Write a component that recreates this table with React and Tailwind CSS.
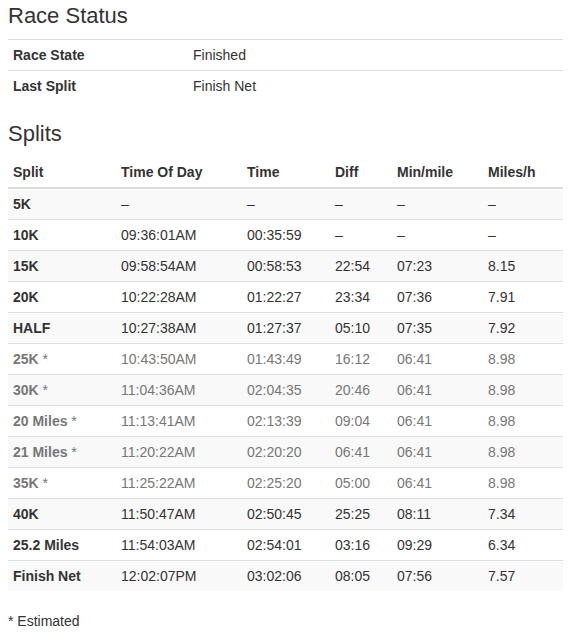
const rows = [
  { name: '5K', tod: '–', time: '–', diff: '–', pace: '–', mph: '–' },
  { name: '10K', tod: '09:36:01AM', time: '00:35:59', diff: '–', pace: '–', mph: '–' },
  { name: '15K', tod: '09:58:54AM', time: '00:58:53', diff: '22:54', pace: '07:23', mph: '8.15' },
  { name: '20K', tod: '10:22:28AM', time: '01:22:27', diff: '23:34', pace: '07:36', mph: '7.91' },
  { name: 'HALF', tod: '10:27:38AM', time: '01:27:37', diff: '05:10', pace: '07:35', mph: '7.92' },
  { name: '25K', est: true, tod: '10:43:50AM', time: '01:43:49', diff: '16:12', pace: '06:41', mph: '8.98' },
  { name: '30K', est: true, tod: '11:04:36AM', time: '02:04:35', diff: '20:46', pace: '06:41', mph: '8.98' },
  { name: '20 Miles', est: true, tod: '11:13:41AM', time: '02:13:39', diff: '09:04', pace: '06:41', mph: '8.98' },
  { name: '21 Miles', est: true, tod: '11:20:22AM', time: '02:20:20', diff: '06:41', pace: '06:41', mph: '8.98' },
  { name: '35K', est: true, tod: '11:25:22AM', time: '02:25:20', diff: '05:00', pace: '06:41', mph: '8.98' },
  { name: '40K', tod: '11:50:47AM', time: '02:50:45', diff: '25:25', pace: '08:11', mph: '7.34' },
  { name: '25.2 Miles', tod: '11:54:03AM', time: '02:54:01', diff: '03:16', pace: '09:29', mph: '6.34' },
  { name: 'Finish Net', tod: '12:02:07PM', time: '03:02:06', diff: '08:05', pace: '07:56', mph: '7.57' },
];

export default function App() {
  return (
    <div
      className="bg-white text-[#333] text-[14px] leading-[20px] px-[8px] pb-[10px]"
      style={{ fontFamily: '"Liberation Sans", Arial, sans-serif' }}
    >
      <h3 className="text-[22px] leading-[24px] font-normal mt-[4px] mb-[11px]">Race Status</h3>
      <table className="w-[555px] table-fixed border-collapse">
        <colgroup>
          <col className="w-[180px]" />
          <col />
        </colgroup>
        <tbody>
          <tr>
            <th className="text-left font-bold px-[5px] py-[5px] border-t border-[#ddd]">Race State</th>
            <td className="px-[5px] py-[5px] border-t border-[#ddd]">Finished</td>
          </tr>
          <tr>
            <th className="text-left font-bold px-[5px] py-[5px] border-t border-[#ddd]">Last Split</th>
            <td className="px-[5px] py-[5px] border-t border-[#ddd]">Finish Net</td>
          </tr>
        </tbody>
      </table>

      <h3 className="text-[22px] leading-[24px] font-normal mt-[21px] mb-[11px]">Splits</h3>
      <table className="w-[555px] table-fixed border-collapse">
        <colgroup>
          <col className="w-[108px]" />
          <col className="w-[126px]" />
          <col className="w-[88px]" />
          <col className="w-[62px]" />
          <col className="w-[91px]" />
          <col className="w-[80px]" />
        </colgroup>
        <thead>
          <tr>
            {['Split', 'Time Of Day', 'Time', 'Diff', 'Min/mile', 'Miles/h'].map(h => (
              <th key={h} className="text-left font-bold px-[5px] py-[5px] border-b-2 border-[#ddd]">{h}</th>
            ))}
          </tr>
        </thead>
        <tbody>
          {rows.map((r, i) => (
            <tr key={r.name} className={`${i % 2 === 0 ? 'bg-[#f9f9f9]' : ''} ${r.est ? 'text-[#777]' : ''}`}>
              <th className="text-left font-bold px-[5px] py-[5px] border-t border-[#ddd]">
                {r.name}
                {r.est && <span className="font-normal"> *</span>}
              </th>
              <td className="px-[5px] py-[5px] border-t border-[#ddd]">{r.tod}</td>
              <td className="px-[5px] py-[5px] border-t border-[#ddd]">{r.time}</td>
              <td className="px-[5px] py-[5px] border-t border-[#ddd]">{r.diff}</td>
              <td className="px-[5px] py-[5px] border-t border-[#ddd]">{r.pace}</td>
              <td className="px-[5px] py-[5px] border-t border-[#ddd]">{r.mph}</td>
            </tr>
          ))}
        </tbody>
      </table>

      <p className="mt-[20px]">* Estimated</p>
    </div>
  );
}
